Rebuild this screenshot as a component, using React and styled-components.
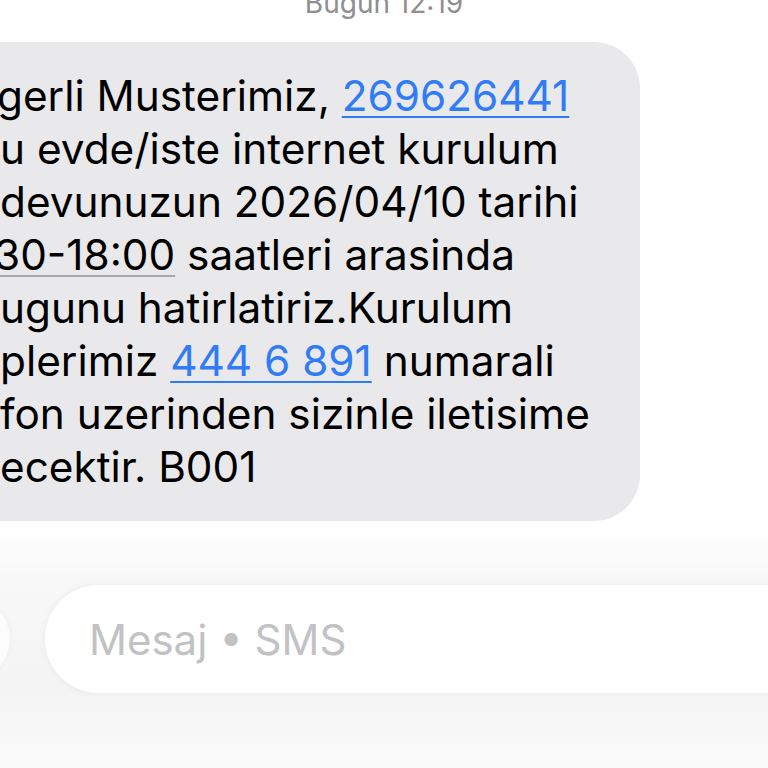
import React from "react";
import styled, { createGlobalStyle } from "styled-components";

const GlobalStyle = createGlobalStyle`
    html, body {
        margin: 0;
        padding: 0;
        background: #ffffff;
    }
    body {
        font-family: Inter, "Noto Sans", "Liberation Sans", sans-serif;
        -webkit-font-smoothing: antialiased;
    }
`;

const Screen = styled.div`
    width: 768px;
    height: 768px;
    overflow: hidden;
    display: flex;
    flex-direction: column;
    background: #ffffff;
`;

const Stamp = styled.div`
    margin-top: -14px;
    height: 34px;
    line-height: 34px;
    text-align: center;
    font-size: 28px;
    color: #8e8e93;
`;

const Thread = styled.div`
    display: flex;
    padding-top: 22px;
`;

const Bubble = styled.div`
    margin-left: -48px;
    width: 688px;
    box-sizing: border-box;
    padding: 27px 0 28px 48px;
    background: #e9e9eb;
    border-radius: 46px;
    font-size: 42.3px;
    line-height: 53px;
    color: #000;
`;

const Line = styled.div`
    white-space: nowrap;
    margin-left: ${(p) => p.$shift || 0}px;
`;

const Link = styled.span`
    color: ${(p) => (p.$plain ? "#000" : "#2f7cf6")};
    text-decoration: underline;
    text-decoration-color: ${(p) => (p.$plain ? "#a8a8ac" : "#2f7cf6")};
    text-decoration-thickness: 2px;
    text-underline-offset: 5px;
`;

const Composer = styled.div`
    margin-top: auto;
    height: 230px;
    display: flex;
    align-items: center;
    background: linear-gradient(#fdfdfd 0px, #f8f8f8 40px, #f4f4f4 150px, #fafafa 230px);
    padding-bottom: 28px;
    box-sizing: border-box;
`;

const PlusButton = styled.div`
    flex: none;
    width: 84px;
    height: 84px;
    margin-left: -74px;
    border-radius: 50%;
    background: #fcfcfc;
    box-shadow: 0 0 6px rgba(0, 0, 0, 0.04);
`;

const Field = styled.div`
    flex: none;
    margin-left: 35px;
    width: 820px;
    height: 108px;
    box-sizing: border-box;
    padding-left: 44px;
    display: flex;
    align-items: center;
    border-radius: 54px;
    background: #ffffff;
    box-shadow: 0 0 8px rgba(0, 0, 0, 0.05);
    font-size: 42px;
    color: #c2c2c4;
`;

const App = () => {
    return (
        <Screen>
            <GlobalStyle />
            <Stamp>Bugun 12:19</Stamp>
            <Thread>
                <Bubble>
                    <Line $shift={-3}>gerli Musterimiz, <Link>269626441</Link></Line>
                    <Line>u evde/iste internet kurulum</Line>
                    <Line>devunuzun 2026/04/10 tarihi</Line>
                    <Line $shift={-6}><Link $plain>30-18:00</Link> saatleri arasinda</Line>
                    <Line>ugunu hatirlatiriz.Kurulum</Line>
                    <Line>plerimiz <Link>444 6 891</Link> numarali</Line>
                    <Line>fon uzerinden sizinle iletisime</Line>
                    <Line>ecektir. B001</Line>
                </Bubble>
            </Thread>
            <Composer>
                <PlusButton />
                <Field>Mesaj • SMS</Field>
            </Composer>
        </Screen>
    );
};

export default App;
